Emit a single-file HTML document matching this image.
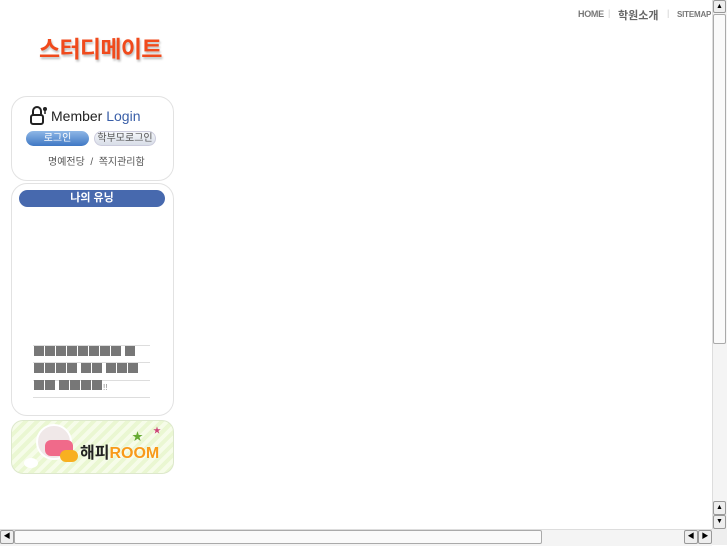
<!DOCTYPE html>
<html><head><meta charset="utf-8"><style>
body{margin:0;width:727px;height:545px;position:relative;background:#fff;font-family:"Liberation Sans","Noto Sans CJK KR",sans-serif;overflow:hidden}
.a{position:absolute}
.box{position:absolute;border:1px solid #e2e2e2;border-radius:16px;background:#fff}
.sq{display:inline-block;width:10px;height:10px;background:#777;margin-right:1px}
.line{position:absolute;left:33px;width:117px;border-top:1px solid #ddd}
.nav{position:absolute;top:9px;font-size:9px;color:#777;font-weight:bold;font-family:"Liberation Sans",sans-serif}
</style></head><body>
<div class="nav" style="left:578px;letter-spacing:-0.3px">HOME</div>
<div class="a" style="left:608px;top:8px;font-size:9px;color:#ccc">|</div>
<div class="a" style="left:618px;top:7px;font-size:11px;color:#666;font-weight:bold">학원소개</div>
<div class="a" style="left:667px;top:8px;font-size:9px;color:#ccc">|</div>
<div class="nav" style="left:677px;font-size:8px;top:10px;letter-spacing:-0.2px">SITEMAP</div>
<div class="a" style="left:39px;top:30px;font-size:23px;font-weight:bold;color:#f04a1c;text-shadow:1px 2px 2px #bbb;letter-spacing:-0.7px">스터디메이트</div>

<div class="box" style="left:11px;top:96px;width:161px;height:83px"></div>
<svg class="a" style="left:29px;top:105px" width="20" height="20"><path d="M4 10V6a4 4 0 0 1 8 0v4" fill="none" stroke="#222" stroke-width="2"/><rect x="2" y="10" width="12" height="9" rx="2" fill="none" stroke="#222" stroke-width="2"/><circle cx="16" cy="4" r="2" fill="#222"/><path d="M16 4v5" stroke="#222" stroke-width="1.5"/></svg>
<div class="a" style="left:51px;top:108px;font-size:14px;color:#222">Member <span style="color:#3a5fa8">Login</span></div>
<div class="a" style="left:26px;top:131px;width:63px;height:15px;border-radius:8px;background:linear-gradient(#8fb7e6,#3f78c4);color:#fff;font-size:10px;text-align:center;line-height:15px">로그인</div>
<div class="a" style="left:94px;top:131px;width:62px;height:15px;border-radius:8px;background:linear-gradient(#f4f6fa,#d8dee8);border:1px solid #ccd;box-sizing:border-box;color:#555;font-size:10px;text-align:center;line-height:13px">학부모로그인</div>
<div class="a" style="left:48px;top:153px;font-size:10px;color:#555">명예전당 &nbsp;/ &nbsp;쪽지관리함</div>

<div class="box" style="left:11px;top:183px;width:161px;height:231px"></div>
<div class="a" style="left:19px;top:190px;width:146px;height:17px;border-radius:9px;background:#4769ae;color:#fff;font-size:11px;font-weight:bold;text-align:center;line-height:17px">나의 유닝</div>
<div class="line" style="top:345px"></div>
<div class="line" style="top:362px"></div>
<div class="line" style="top:380px"></div>
<div class="line" style="top:397px"></div>
<div class="a" style="left:34px;top:346px;line-height:10px"><span class="sq"></span><span class="sq"></span><span class="sq"></span><span class="sq"></span><span class="sq"></span><span class="sq"></span><span class="sq"></span><span class="sq"></span><span style="display:inline-block;width:3px"></span><span class="sq"></span></div>
<div class="a" style="left:34px;top:363px;line-height:10px"><span class="sq"></span><span class="sq"></span><span class="sq"></span><span class="sq"></span><span style="display:inline-block;width:3px"></span><span class="sq"></span><span class="sq"></span><span style="display:inline-block;width:3px"></span><span class="sq"></span><span class="sq"></span><span class="sq"></span></div>
<div class="a" style="left:34px;top:380px;line-height:10px"><span class="sq"></span><span class="sq"></span><span style="display:inline-block;width:3px"></span><span class="sq"></span><span class="sq"></span><span class="sq"></span><span class="sq"></span><span style="font-size:8px;color:#888">!!</span></div>

<div class="a" style="left:11px;top:420px;width:161px;height:52px;border:1px solid #dde8cc;border-radius:12px;background:repeating-linear-gradient(135deg,#eaf7d2 0 4px,#f6fce9 4px 8px)"></div>
<div class="a" style="left:36px;top:424px;width:32px;height:32px;border-radius:50%;background:#f0e8e8;border:2px solid #fff"></div>
<div class="a" style="left:45px;top:440px;width:28px;height:16px;border-radius:6px;background:#f06a8a"></div>
<div class="a" style="left:60px;top:450px;width:18px;height:12px;border-radius:6px;background:#f8b020"></div>
<div class="a" style="left:24px;top:458px;width:14px;height:10px;border-radius:50%;background:#fff"></div>
<div class="a" style="left:80px;top:439px;font-size:16px;font-weight:bold;color:#222">해피<span style="color:#f89a1a;text-shadow:0 0 2px #fff">ROOM</span></div>
<div class="a" style="left:132px;top:428px;color:#6a3;font-size:11px">★</div>
<div class="a" style="left:153px;top:425px;color:#c47;font-size:8px">★</div>

<!-- scrollbars -->
<div class="a" style="left:712px;top:0;width:15px;height:529px;background:#f4f4f4;border-left:1px solid #ddd"></div>
<div class="a" style="left:713px;top:0;width:13px;height:13px;background:#eee;border:1px solid #999;border-radius:2px;box-sizing:border-box;font-size:7px;text-align:center;line-height:11px">▲</div>
<div class="a" style="left:713px;top:14px;width:13px;height:330px;background:#fafafa;border:1px solid #aaa;border-radius:2px;box-sizing:border-box"></div>
<div class="a" style="left:713px;top:501px;width:13px;height:14px;background:#eee;border:1px solid #999;border-radius:2px;box-sizing:border-box;font-size:7px;text-align:center;line-height:12px">▲</div>
<div class="a" style="left:713px;top:515px;width:13px;height:14px;background:#eee;border:1px solid #999;border-radius:2px;box-sizing:border-box;font-size:7px;text-align:center;line-height:12px">▼</div>
<div class="a" style="left:0;top:529px;width:712px;height:16px;background:#f4f4f4;border-top:1px solid #ddd"></div>
<div class="a" style="left:0;top:530px;width:14px;height:14px;background:#eee;border:1px solid #999;border-radius:2px;box-sizing:border-box;font-size:7px;text-align:center;line-height:12px">◀</div>
<div class="a" style="left:14px;top:530px;width:528px;height:14px;background:#fafafa;border:1px solid #aaa;border-radius:2px;box-sizing:border-box"></div>
<div class="a" style="left:684px;top:530px;width:14px;height:14px;background:#eee;border:1px solid #999;border-radius:2px;box-sizing:border-box;font-size:7px;text-align:center;line-height:12px">◀</div>
<div class="a" style="left:698px;top:530px;width:14px;height:14px;background:#eee;border:1px solid #999;border-radius:2px;box-sizing:border-box;font-size:7px;text-align:center;line-height:12px">▶</div>
<div class="a" style="left:712px;top:529px;width:15px;height:16px;background:#eee"></div>
</body></html>
